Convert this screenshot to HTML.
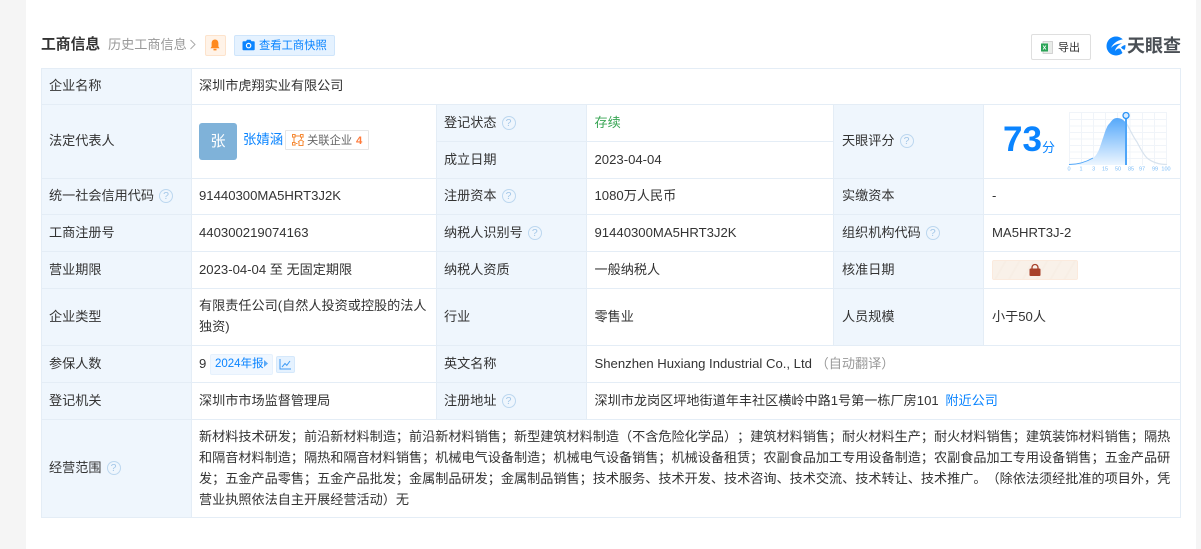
<!DOCTYPE html>
<html lang="zh"><head><meta charset="utf-8"><title>工商信息</title>
<style>
html,body{margin:0;padding:0}
body{width:1201px;height:549px;overflow:hidden;background:#f5f5f5;position:relative;font-family:"Liberation Sans","Noto Sans CJK SC",sans-serif;font-size:13.13px;color:#333;text-spacing-trim:space-all}
#p{position:absolute;left:26px;top:0;width:1170px;height:549px;background:#fff}
.a{position:absolute;white-space:nowrap}
.h{position:absolute;background:#eff6fd}
.l{position:absolute;background:#e4edf6}
.t{position:absolute;white-space:nowrap;line-height:18px;height:18px;margin-top:1px}
.q{display:inline-block;width:12px;height:12px;border:1px solid #bcd7ef;border-radius:50%;color:#a3c7e8;font-size:10.5px;line-height:12px;text-align:center;vertical-align:top;margin:2px 0 0 5px}
</style></head><body>
<div id="p"></div>

<div class="t" style="left:41px;top:35px;font-size:14.8px;font-weight:bold;color:#333">工商信息</div>
<div class="t" style="left:108px;top:35px;color:#999">历史工商信息</div>
<svg class="a" style="left:189px;top:39px" width="8" height="11"><path d="M1.500 1l4.500 4.500-4.500 4.500" fill="none" stroke="#aaa" stroke-width="1"/></svg>
<div class="a" style="left:205px;top:35px;width:19px;height:19px;background:#fff3e8;border:1px solid #fde3cc;border-radius:2px"></div>
<svg class="a" style="left:209px;top:39px" width="12" height="12"><path d="M6 .5C3.500 .5 2.600 2.500 2.600 4.500V7.500L1.500 9.300H10.500L9.400 7.500V4.500C9.400 2.500 8.500 .5 6 .5Z" fill="#ff8a1f"/><rect x="4.500" y="9.800" width="3" height="1.600" fill="#ff8a1f"/></svg>
<div class="a" style="left:234px;top:35px;width:99px;height:19px;background:#e5f2ff;border:1px solid #cfe5fb;border-radius:2px"></div>
<svg class="a" style="left:242px;top:39px" width="13" height="12"><path d="M1.500 2.200H4L5 .8H8.500L9.500 2.200H11.700A1 1 0 0 1 12.700 3.200V10.200A1 1 0 0 1 11.700 11.200H1.500A1 1 0 0 1 .5 10.200V3.200A1 1 0 0 1 1.500 2.200Z" fill="#0a84ff"/><circle cx="6.600" cy="6.600" r="2.200" fill="none" stroke="#fff" stroke-width="1.200"/></svg>
<div class="t" style="left:259px;top:36px;font-size:11.3px;color:#0a84ff">查看工商快照</div>

<div class="a" style="left:1031px;top:34px;width:58px;height:24px;border:1px solid #dfdfdf;border-radius:2px;background:#fff"></div>
<svg class="a" style="left:1041px;top:41px" width="12" height="13"><rect x="2" y=".5" width="9.500" height="12" fill="#e9ece9" stroke="#bbb" stroke-width=".6"/><rect x="0" y="2.500" width="7" height="8" fill="#2aa457"/><path d="M2 4.500L5 8.500M5 4.500L2 8.500" stroke="#fff" stroke-width=".8"/></svg>
<div class="t" style="left:1058px;top:38px;font-size:11px;color:#333">导出</div>
<svg class="a" style="left:1106px;top:36px" width="20" height="20"><circle cx="10" cy="10" r="9.500" fill="#0a84ff"/><path d="M20 3C13 3 7 7 5 12C8 8.500 12 7.500 16 7.500C12 9 9.500 12 9 15C11 12.500 13 12 14.500 13L17 18L20 14C18 14 16 13 15 11.500C16 10 18 9 20 9Z" fill="#fff"/></svg>
<div class="t" style="left:1127px;top:35px;font-size:18px;line-height:20px;height:20px;font-weight:bold;color:#4a4f55">天眼查</div>

<!-- header fills -->
<div class="h" style="left:41px;top:68px;width:150px;height:449px"></div>
<div class="h" style="left:436px;top:104px;width:150px;height:74px"></div>
<div class="h" style="left:436px;top:178px;width:150px;height:241px"></div>
<div class="h" style="left:833px;top:104px;width:150px;height:185px"></div>
<div class="h" style="left:833px;top:288px;width:150px;height:57px"></div>

<!-- horizontals -->
<div class="l" style="left:41px;top:68px;width:1140px;height:1px"></div>
<div class="l" style="left:41px;top:104px;width:1140px;height:1px"></div>
<div class="l" style="left:436px;top:141px;width:397px;height:1px"></div>
<div class="l" style="left:41px;top:178px;width:1140px;height:1px"></div>
<div class="l" style="left:41px;top:214px;width:1140px;height:1px"></div>
<div class="l" style="left:41px;top:251px;width:1140px;height:1px"></div>
<div class="l" style="left:41px;top:288px;width:1140px;height:1px"></div>
<div class="l" style="left:41px;top:345px;width:1140px;height:1px"></div>
<div class="l" style="left:41px;top:382px;width:1140px;height:1px"></div>
<div class="l" style="left:41px;top:419px;width:1140px;height:1px"></div>
<div class="l" style="left:41px;top:517px;width:1140px;height:1px"></div>
<!-- verticals -->
<div class="l" style="left:41px;top:68px;width:1px;height:450px"></div>
<div class="l" style="left:191px;top:68px;width:1px;height:450px"></div>
<div class="l" style="left:436px;top:104px;width:1px;height:315px"></div>
<div class="l" style="left:586px;top:104px;width:1px;height:315px"></div>
<div class="l" style="left:833px;top:104px;width:1px;height:241px"></div>
<div class="l" style="left:983px;top:104px;width:1px;height:241px"></div>
<div class="l" style="left:1180px;top:68px;width:1px;height:450px"></div>

<!-- col 1 labels -->
<div class="t" style="left:49px;top:76px">企业名称</div>
<div class="t" style="left:49px;top:131px">法定代表人</div>
<div class="t" style="left:49px;top:186px">统一社会信用代码<span class="q">?</span></div>
<div class="t" style="left:49px;top:223px">工商注册号</div>
<div class="t" style="left:49px;top:260px">营业期限</div>
<div class="t" style="left:49px;top:307px">企业类型</div>
<div class="t" style="left:49px;top:354px">参保人数</div>
<div class="t" style="left:49px;top:391px">登记机关</div>
<div class="t" style="left:49px;top:458px">经营范围<span class="q">?</span></div>

<!-- col 2 values -->
<div class="t" style="left:199px;top:76px">深圳市虎翔实业有限公司</div>
<div class="a" style="left:199px;top:123px;width:38px;height:37px;background:#7fb2d9;border-radius:3px;color:#fff;font-size:15px;line-height:37px;text-align:center">张</div>
<div class="t" style="left:243px;top:130px;font-size:13.4px;color:#0a84ff">张婧涵</div>
<div class="a" style="left:285px;top:130px;width:82px;height:18px;border:1px solid #e6e6e6;border-radius:1px;background:#fff"></div>
<svg class="a" style="left:292px;top:134px" width="13" height="12"><g fill="none" stroke="#f58a36" stroke-width="1"><rect x=".5" y=".5" width="2.600" height="2.600"/><rect x="8.500" y=".5" width="2.600" height="2.600"/><rect x=".5" y="8.500" width="2.600" height="2.600"/><path d="M3 2H8.500M2 3V8.500M9.500 3V5M4 9.500H5.500M6 8L9 5.800 12 8M7 8V11.500H11V8"/></g></svg>
<div class="t" style="left:307px;top:131px;font-size:11.3px;color:#666">关联企业</div>
<div class="t" style="left:356px;top:131px;font-size:11.3px;font-weight:bold;color:#ff7a3a">4</div>
<div class="t" style="left:199px;top:186px">91440300MA5HRT3J2K</div>
<div class="t" style="left:199px;top:223px">440300219074163</div>
<div class="t" style="left:199px;top:260px">2023-04-04 至 无固定期限</div>
<div class="a" style="left:199px;top:295px;width:232px;line-height:21px;white-space:normal">有限责任公司(自然人投资或控股的法人独资)</div>
<div class="t" style="left:199px;top:354px">9</div>
<div class="a" style="left:210px;top:354px;width:61px;height:19px;background:#f0f7ff;border:1px solid #e6f1fd;border-radius:2px"></div>
<div class="t" style="left:215px;top:354px;font-size:11.5px;color:#0a84ff">2024年报</div>
<svg class="a" style="left:264px;top:360px" width="5" height="7"><path d="M0 0L4 3.500 0 7Z" fill="#5aa9f7"/></svg>
<div class="a" style="left:276px;top:356px;width:17px;height:15px;background:#e5f2ff;border:1px solid #d5e8fb;border-radius:2px"></div>
<svg class="a" style="left:279px;top:358px" width="13" height="13"><path d="M1 1V11H12M3 9L6 5.500 7.800 7.300 11 3" fill="none" stroke="#3e9bf5" stroke-width="1"/></svg>
<div class="t" style="left:199px;top:391px">深圳市市场监督管理局</div>

<!-- col 3 labels -->
<div class="t" style="left:444px;top:113px">登记状态<span class="q">?</span></div>
<div class="t" style="left:444px;top:150px">成立日期</div>
<div class="t" style="left:444px;top:186px">注册资本<span class="q">?</span></div>
<div class="t" style="left:444px;top:223px">纳税人识别号<span class="q">?</span></div>
<div class="t" style="left:444px;top:260px">纳税人资质</div>
<div class="t" style="left:444px;top:307px">行业</div>
<div class="t" style="left:444px;top:354px">英文名称</div>
<div class="t" style="left:444px;top:391px">注册地址<span class="q">?</span></div>

<!-- col 4 values -->
<div class="t" style="left:594.500px;top:113px;color:#3aa655">存续</div>
<div class="t" style="left:594.500px;top:150px">2023-04-04</div>
<div class="t" style="left:594.500px;top:186px">1080万人民币</div>
<div class="t" style="left:594.500px;top:223px">91440300MA5HRT3J2K</div>
<div class="t" style="left:594.500px;top:260px">一般纳税人</div>
<div class="t" style="left:594.500px;top:307px">零售业</div>
<div class="t" style="left:594.500px;top:354px">Shenzhen Huxiang Industrial Co., Ltd <span style="color:#999">（自动翻译）</span></div>
<div class="t" style="left:594.500px;top:391px">深圳市龙岗区坪地街道年丰社区横岭中路1号第一栋厂房101 <span style="color:#0a84ff;margin-left:3px">附近公司</span></div>

<!-- col 5 labels -->
<div class="t" style="left:842px;top:131px">天眼评分<span class="q">?</span></div>
<div class="t" style="left:842px;top:186px">实缴资本</div>
<div class="t" style="left:842px;top:223px">组织机构代码<span class="q">?</span></div>
<div class="t" style="left:842px;top:260px">核准日期</div>
<div class="t" style="left:842px;top:307px">人员规模</div>

<!-- col 6 -->
<div class="a" style="left:1003px;top:120px;font-size:35px;line-height:40px;font-weight:bold;color:#0a84ff">73</div>
<div class="a" style="left:1042px;top:139px;font-size:13px;line-height:18px;color:#0a84ff">分</div>
<svg class="a" style="left:1066px;top:110px" width="106" height="64" font-family="Liberation Sans" font-size="5.500" fill="#7cbcf7" text-anchor="middle">
<defs><linearGradient id="g" x1="0" y1="0" x2="0" y2="1"><stop offset="0" stop-color="#55a8fa"/><stop offset="1" stop-color="#edf6ff"/></linearGradient></defs>
<g stroke="#f0f4f9" stroke-width="1" fill="none">
<path d="M3 2.500H101M3 9.500H101M3 16H101M3 22.500H101M3 29H101M3 35.500H101M3 42H101M3 48.500H101"/>
<path d="M3.500 2V55M15.500 2V55M27.500 2V55M39.500 2V55M51.500 2V55M64 2V55M76.500 2V55M88.500 2V55M100.500 2V55"/>
</g>
<path d="M60 13C63 17 67 27 71 32C75 40 78 45 81 48C86 52 93 54.500 101 54.500" fill="none" stroke="#d8e3ee" stroke-width="1.200"/>
<path d="M3 55C12 55 20 52 27 48C33 44 35 33 37 28C39 22 41 15 44 13C46 10 48 8 51 8C55 8 58 10 60 13V55Z" fill="url(#g)"/>
<path d="M3 54.500C12 54.500 20 52 27 48" fill="none" stroke="#4ea5f8" stroke-width="1"/>
<rect x="59" y="9" width="2" height="46" fill="#4ea5f8"/>
<circle cx="60" cy="5.500" r="3" fill="#d8ecff" stroke="#2b93f6" stroke-width="1.300"/>
<text x="3" y="60.500">0</text><text x="15" y="60.500">1</text><text x="27.600" y="60.500">3</text><text x="39" y="60.500">15</text><text x="52" y="60.500">50</text><text x="65" y="60.500">85</text><text x="76" y="60.500">97</text><text x="89" y="60.500">99</text><text x="100" y="60.500">100</text>
</svg>
<div class="t" style="left:992px;top:186px">-</div>
<div class="t" style="left:992px;top:223px">MA5HRT3J-2</div>
<div class="a" style="left:992px;top:260px;width:84px;height:18px;border:1px solid #fbeadd;border-radius:2px;background:repeating-linear-gradient(120deg,#f9f1e9 0 10px,#f7eee5 10px 12px)"></div>
<svg class="a" style="left:1029px;top:263px" width="12" height="14"><path d="M3 6V4.500A3 3 0 0 1 9 4.500V6" fill="none" stroke="#a8412a" stroke-width="1.300"/><rect x=".5" y="5.500" width="11" height="7.500" rx="1" fill="#a8412a"/></svg>
<div class="t" style="left:992px;top:307px">小于50人</div>

<!-- scope -->
<div class="a" style="left:199px;top:426px;width:975px;line-height:21px;white-space:normal">新材料技术研发；前沿新材料制造；前沿新材料销售；新型建筑材料制造（不含危险化学品）；建筑材料销售；耐火材料生产；耐火材料销售；建筑装饰材料销售；隔热和隔音材料制造；隔热和隔音材料销售；机械电气设备制造；机械电气设备销售；机械设备租赁；农副食品加工专用设备制造；农副食品加工专用设备销售；五金产品研发；五金产品零售；五金产品批发；金属制品研发；金属制品销售；技术服务、技术开发、技术咨询、技术交流、技术转让、技术推广。（除依法须经批准的项目外，凭营业执照依法自主开展经营活动）无</div>
</body></html>
